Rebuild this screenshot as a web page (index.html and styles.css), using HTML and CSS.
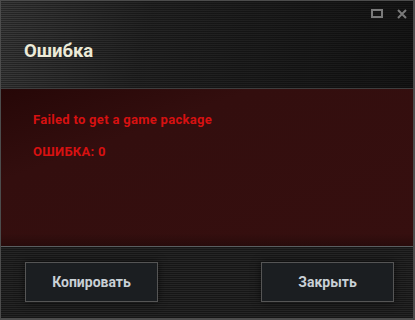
FILE: index.html
```html
<!DOCTYPE html>
<html lang="ru">

<head>
    <meta charset="UTF-8">
    <meta name="viewport" content="width=device-width, initial-scale=1.0">
    <title>Ошибка</title>
    <link rel="stylesheet" href="styles.css">
</head>

<body>
    <div class="window">
        <div class="header">
            <div class="controls">
                <span class="ctl maximize"></span>
                <svg class="ctl close" width="10" height="10" viewBox="0 0 10 10">
                    <path d="M1 1 L9 9 M9 1 L1 9" stroke="#7a7a7a" stroke-width="2" />
                </svg>
            </div>
            <h1 class="title">Ошибка</h1>
        </div>
        <div class="content">
            <p class="message">Failed to get a game package</p>
            <p class="message">ОШИБКА: 0</p>
        </div>
        <div class="footer">
            <button class="button">Копировать</button>
            <button class="button">Закрыть</button>
        </div>
    </div>
</body>

</html>
```

FILE: styles.css
```css
/* General Reset */
* {
    margin: 0;
    padding: 0;
    box-sizing: border-box;
}

body {
    font-family: Roboto, "Liberation Sans", sans-serif;
    background: #000;
}

.window {
    width: 415px;
    height: 320px;
    border: 1px solid #4c4c4c;
    border-right-width: 2px;
    border-bottom-width: 2px;
    display: flex;
    flex-direction: column;
    background: #141414;
}

.header {
    height: 88px;
    padding: 7px 6px 0 23px;
    border-bottom: 1px solid #3e3e3e;
    background:
        repeating-linear-gradient(to bottom, rgba(0, 0, 0, 0.35) 0 1px, transparent 1px 2px),
        linear-gradient(100deg, #3a3a3a 0%, #242424 35%, #161616 100%);
}

.controls {
    display: flex;
    justify-content: flex-end;
    align-items: center;
    gap: 14px;
    height: 11px;
}

.ctl.maximize {
    width: 12px;
    height: 9px;
    border: 2px solid #7a7a7a;
}

.title {
    margin-top: 21px;
    font-size: 18.5px;
    font-weight: bold;
    color: #ecead8;
}

.content {
    flex: 1;
    padding: 23px 32px;
    display: flex;
    flex-direction: column;
    gap: 17px;
    background:
        linear-gradient(to bottom, transparent 92%, rgba(0, 0, 0, 0.25) 100%),
        linear-gradient(160deg, #260707 0%, #330e0e 30%, #360f0f 100%);
    border-bottom: 1px solid #5a5e60;
}

.message {
    font-size: 13px;
    font-weight: bold;
    color: #d71111;
    line-height: 15px;
    letter-spacing: 0.3px;
}

.footer {
    height: 71px;
    padding: 15px 19px 0 24px;
    display: flex;
    justify-content: space-between;
    align-items: flex-start;
    background:
        repeating-linear-gradient(to bottom, rgba(0, 0, 0, 0.4) 0 1px, transparent 1px 2px),
        #252525;
}

.button {
    width: 133px;
    height: 40px;
    background: #1b1e21;
    border: 1px solid #555;
    color: #c9d0d6;
    font-family: inherit;
    font-size: 14px;
    font-weight: bold;
    box-shadow: 0 0 8px rgba(0, 0, 0, 0.6);
    cursor: pointer;
}
```
